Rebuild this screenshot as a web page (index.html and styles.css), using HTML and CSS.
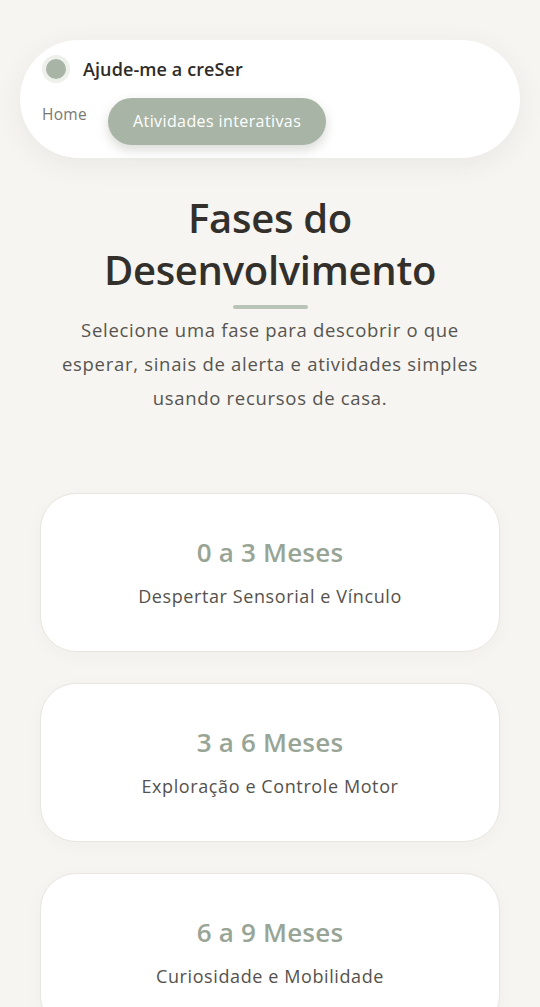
FILE: index.html
```html
<!DOCTYPE html>
<html lang="pt">
<head>
<meta charset="utf-8">
<title>Fases do Desenvolvimento</title>
<link rel="stylesheet" href="styles.css">
</head>
<body>
<div class="page">
  <header class="topbar">
    <div class="brand">
      <span class="logo"><span class="logo-dot"></span></span>
      <span class="brand-name">Ajude-me a creSer</span>
    </div>
    <nav class="nav">
      <a class="nav-link" href="#">Home</a>
      <a class="nav-pill" href="#">Atividades interativas</a>
    </nav>
  </header>

  <section class="intro">
    <h1 class="title">Fases do Desenvolvimento</h1>
    <div class="rule"></div>
    <p class="lead">Selecione uma fase para descobrir o que esperar, sinais de alerta e atividades simples usando recursos de casa.</p>
  </section>

  <section class="phases">
    <div class="card">
      <h2 class="card-title">0 a 3 Meses</h2>
      <p class="card-sub">Despertar Sensorial e Vínculo</p>
    </div>
    <div class="card">
      <h2 class="card-title">3 a 6 Meses</h2>
      <p class="card-sub">Exploração e Controle Motor</p>
    </div>
    <div class="card">
      <h2 class="card-title">6 a 9 Meses</h2>
      <p class="card-sub">Curiosidade e Mobilidade</p>
    </div>
  </section>
</div>
</body>
</html>
```

FILE: styles.css
```css
* { box-sizing: border-box; }
html, body {
  margin: 0;
  padding: 0;
  background: #f6f5f2;
  font-family: "Open Sans", "Noto Sans", sans-serif;
  color: #35322e;
}
.page {
  padding: 40px 20px 0;
}
.topbar {
  background: #ffffff;
  border-radius: 60px;
  padding: 15px 22px 13px;
  box-shadow: 0 6px 28px rgba(60, 55, 45, 0.07);
}
.brand {
  display: flex;
  align-items: center;
  gap: 13px;
  height: 28px;
}
.logo {
  width: 28px;
  height: 28px;
  border-radius: 50%;
  background: #eef0ec;
  display: flex;
  align-items: center;
  justify-content: center;
}
.logo-dot {
  width: 20px;
  height: 20px;
  border-radius: 50%;
  background: #a8b4a5;
}
.brand-name {
  font-size: 18px;
  font-weight: 600;
  color: #2e2b28;
  letter-spacing: 0.1px;
}
.nav {
  display: flex;
  align-items: flex-start;
  gap: 21px;
  margin-top: 15px;
}
.nav-link {
  font-size: 15.5px;
  color: #7a7874;
  text-decoration: none;
  padding-top: 5px;
  font-weight: 500;
  letter-spacing: 0.3px;
}
.nav-pill {
  display: block;
  height: 47px;
  line-height: 47px;
  padding: 0 25px;
  border-radius: 24px;
  background: #a8b4a5;
  color: #ffffff;
  font-size: 16px;
  letter-spacing: 0.4px;
  text-decoration: none;
  box-shadow: 0 5px 12px rgba(80, 90, 75, 0.22);
}
.intro {
  text-align: center;
  margin-top: 34px;
}
.title {
  margin: 0 auto;
  font-size: 40px;
  line-height: 52px;
  font-weight: 600;
  color: #33302c;
  max-width: 380px;
  letter-spacing: -0.3px;
}
.rule {
  width: 75px;
  height: 4px;
  border-radius: 2px;
  background: #b9c3b7;
  margin: 9px auto 0;
}
.lead {
  margin: 4px auto 0;
  max-width: 430px;
  font-size: 18.5px;
  line-height: 34px;
  letter-spacing: 0.7px;
  color: #57544f;
}
.phases {
  margin-top: 78px;
  padding: 0 20px;
  display: flex;
  flex-direction: column;
  gap: 31px;
}
.card {
  background: #ffffff;
  border: 1px solid #e9e5df;
  border-radius: 36px;
  height: 159px;
  padding-bottom: 2px;
  display: flex;
  flex-direction: column;
  align-items: center;
  justify-content: center;
  box-shadow: 0 4px 18px rgba(60, 55, 45, 0.03);
}
.card-title {
  margin: 0;
  font-size: 26px;
  line-height: 32px;
  font-weight: 600;
  color: #98a596;
  letter-spacing: 0.2px;
}
.card-sub {
  margin: 17px 0 0;
  font-size: 18px;
  line-height: 22px;
  letter-spacing: 0.6px;
  color: #55524d;
}
```
